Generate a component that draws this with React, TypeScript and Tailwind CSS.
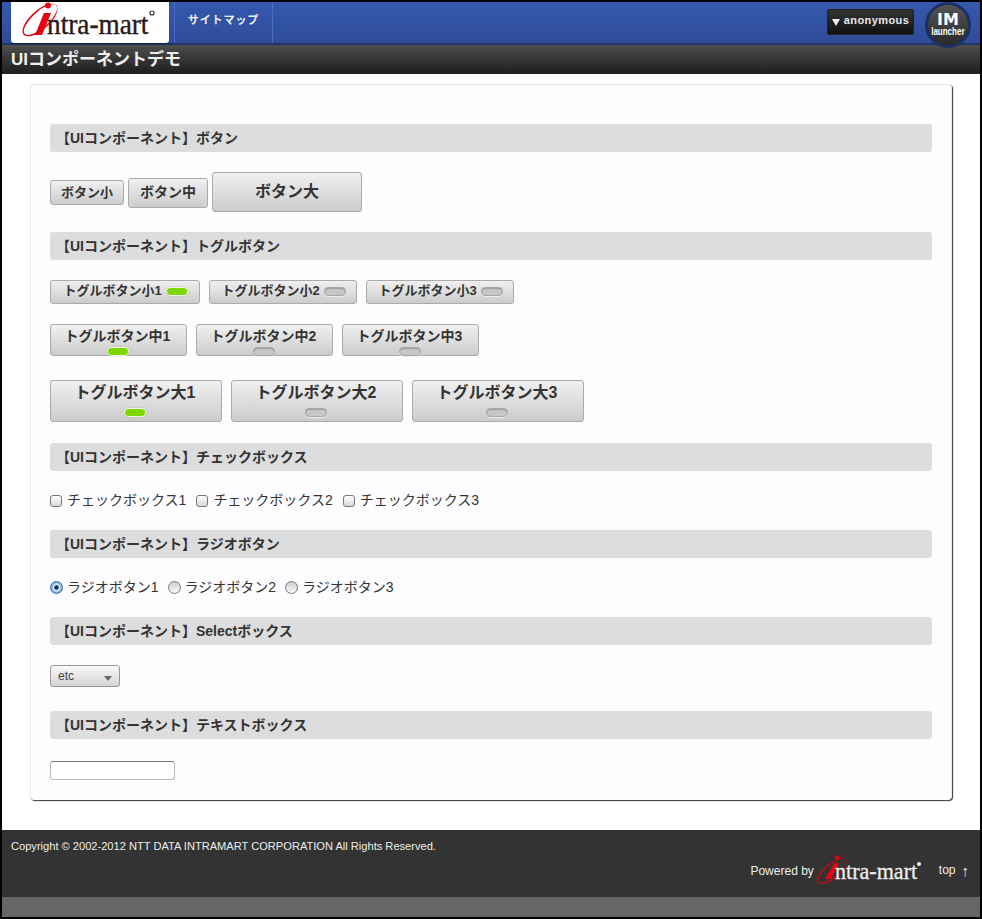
const font = '[font-family:"Liberation_Sans","Noto_Sans_CJK_JP",sans-serif]'

function Logo({ small }: { small?: boolean }) {
  if (small) {
    return (
      <div className="relative h-[32px] w-[106px]">
        <svg className="absolute left-0 top-0" width="106" height="32" viewBox="0 0 106 32">
          <ellipse cx="15" cy="17" rx="18" ry="7.5" transform="rotate(-40 15 17)" fill="#e60012" />
          <ellipse cx="15.4" cy="16.7" rx="17.4" ry="6.4" transform="rotate(-40 15.4 16.7)" fill="#333333" />
          <path d="M17 9 L22 9 L14 25 L8 25 Z" fill="#e60012" />
          <circle cx="20" cy="3.5" r="2.3" fill="#e60012" />
          <circle cx="102" cy="10" r="2" fill="#eeeeee" />
        </svg>
        <span className='absolute left-[18px] top-[2px] origin-left scale-x-[0.92] whitespace-nowrap font-["Liberation_Serif",serif] text-[24px] leading-[30px] text-[#eeeeee] [-webkit-text-stroke:0.3px_#eeeeee]'>
          ntra-mart
        </span>
      </div>
    )
  }
  return (
    <div className="relative h-[41px] w-[158px] rounded-b-[3px] bg-white shadow-[0_1px_1px_rgba(0,0,0,0.3)]">
      <svg className="absolute left-0 top-0" width="158" height="41" viewBox="0 0 158 41">
        <ellipse cx="29" cy="18" rx="22" ry="9.5" transform="rotate(-42 29 18)" fill="#e60012" />
        <ellipse cx="29.5" cy="17.6" rx="21.2" ry="8" transform="rotate(-42 29.5 17.6)" fill="#ffffff" />
        <path d="M33 11 L40 11 L31 33 L24 33 Z" fill="#e60012" />
        <circle cx="37" cy="3.5" r="3" fill="#e60012" />
        <circle cx="141" cy="11" r="2" fill="none" stroke="#333333" strokeWidth="1.2" />
      </svg>
      <span className='absolute left-[36px] top-[6px] origin-left scale-x-[0.94] whitespace-nowrap font-["Liberation_Serif",serif] text-[29px] leading-[32px] text-[#2a1a18] [-webkit-text-stroke:0.4px_#2a1a18]'>
        ntra-mart
      </span>
    </div>
  )
}

function SectionHead({ children }: { children: string }) {
  return (
    <h2 className="flex h-[28px] items-center rounded-[3px] bg-[#dddddd] pl-[6px] text-[14px] font-bold text-[#333333]">
      {children}
    </h2>
  )
}

const raised =
  'rounded-[3px] border border-[#aaaaaa] bg-gradient-to-b from-[#f0f0f0] to-[#cccccc] font-bold text-[#333333]'

function Led({ on }: { on?: boolean }) {
  return (
    <span
      className={
        on
          ? 'block h-[7px] w-[20px] rounded-[4px] bg-[#7ed800] shadow-[0_0_0_1px_#f0f6e0,0_0_2px_1px_rgba(120,140,80,0.4)]'
          : 'block h-[7px] w-[20px] rounded-[4px] bg-[#c6c6c6] shadow-[0_0_0_1px_#a8a8a8,inset_0_1px_1px_rgba(0,0,0,0.2),0_1px_0_1px_#eeeeee]'
      }
    />
  )
}

function Checkbox({ label }: { label: string }) {
  return (
    <label className="flex items-center">
      <input
        type="checkbox"
        className="mr-[5px] h-[12px] w-[12px] appearance-none rounded-[3px] border border-[#777777] bg-gradient-to-b from-[#ffffff] to-[#d8d8d8]"
      />
      {label}
    </label>
  )
}

function Radio({ label, checked }: { label: string; checked?: boolean }) {
  return (
    <label className="flex items-center">
      <span
        className={
          checked
            ? 'mr-[4px] h-[13px] w-[13px] rounded-full border border-[#3a6ea5] bg-[radial-gradient(circle,#12325a_0,#12325a_24%,#e8f4ff_34%,#7fb6ea_62%,#2f7ccc_100%)]'
            : 'mr-[4px] h-[13px] w-[13px] rounded-full border border-[#777777] bg-gradient-to-b from-[#cfcfcf] to-[#fafafa]'
        }
      />
      {label}
    </label>
  )
}

export default function App() {
  return (
    <div className={`h-[919px] bg-black p-[2px] ${font}`}>
      <div className="relative flex h-[915px] flex-col bg-white">
        {/* header */}
        <header className="flex h-[43px] shrink-0 items-start border-b-2 border-[#1f3468] bg-gradient-to-b from-[#3558ae] to-[#2f4c98] pl-[9px]">
          <Logo />
          <nav className="ml-[5px] flex h-[41px] w-[99px] items-start justify-center border-x border-[#4a6cc4] pt-[11px] text-[11px] leading-[14px] font-bold tracking-[0.9px] text-[#eeeeee]">
            サイトマップ
          </nav>
          <button className="ml-auto mr-[66px] mt-[7px] flex h-[26px] w-[87px] items-center justify-center rounded-[2px] border border-[#222222] bg-gradient-to-b from-[#333333] to-[#111111] pb-[3px] text-[11px] font-bold tracking-[0.4px] text-[#e8e8e8]">
            <span className="relative top-[2px] mr-[4px] border-x-[4px] border-t-[7px] border-x-transparent border-t-[#eeeeee]" />
            anonymous
          </button>
        </header>

        {/* launcher badge */}
        <div className="absolute right-[9px] top-0 flex h-[46px] w-[46px] flex-col items-center justify-start rounded-full border-[3px] border-[#1c2f66] bg-gradient-to-b from-[#555555] to-[#2a2a2a] pt-[7px] text-white">
          <span className='font-["DejaVu_Sans",sans-serif] text-[16px] leading-[15px] font-bold'>IM</span>
          <span className="scale-x-[0.8] text-[10px] leading-[10px] font-bold">launcher</span>
        </div>

        <div className="flex h-[29px] shrink-0 items-center bg-gradient-to-b from-[#4e4e4e] to-[#1e1e1e] pl-[9px] text-[17px] font-bold text-[#f0f0f0]">
          UIコンポーネントデモ
        </div>

        {/* main */}
        <main className="flex-1 px-[28px] pt-[10px]">
          <div className="h-[716px] rounded-[4px] border-x border-t border-[#e8e8e8] bg-[#fdfdff] px-[19px] pt-[39px] shadow-[1px_1px_1px_rgba(0,0,0,0.8)]">
            <SectionHead>【UIコンポーネント】ボタン</SectionHead>
            <div className="mt-[20px] flex items-baseline gap-[4px]">
              <button className={`h-[25px] w-[74px] text-[13px] ${raised}`}>ボタン小</button>
              <button className={`h-[30px] w-[80px] text-[14px] ${raised}`}>ボタン中</button>
              <button className={`h-[40px] w-[150px] text-[16px] ${raised}`}>ボタン大</button>
            </div>

            <div className="mt-[20px]">
              <SectionHead>【UIコンポーネント】トグルボタン</SectionHead>
            </div>
            <div className="mt-[20px] flex gap-[9px]">
              <button className={`flex h-[24px] w-[150px] items-center justify-center gap-[5px] pb-[2px] text-[13px] ${raised}`}>
                トグルボタン小1 <Led on />
              </button>
              <button className={`flex h-[24px] w-[148px] items-center justify-center gap-[5px] pb-[2px] text-[13px] ${raised}`}>
                トグルボタン小2 <Led />
              </button>
              <button className={`flex h-[24px] w-[148px] items-center justify-center gap-[5px] pb-[2px] text-[13px] ${raised}`}>
                トグルボタン小3 <Led />
              </button>
            </div>
            <div className="mt-[20px] flex gap-[9px]">
              {['トグルボタン中1', 'トグルボタン中2', 'トグルボタン中3'].map((t, i) => (
                <button key={t} className={`flex h-[32px] w-[137px] flex-col items-center pr-[2px] pt-[2px] text-[14px] leading-[18px] ${raised}`}>
                  {t}
                  <span className="mt-[3px]"><Led on={i === 0} /></span>
                </button>
              ))}
            </div>
            <div className="mt-[24px] flex gap-[9px]">
              {['トグルボタン大1', 'トグルボタン大2', 'トグルボタン大3'].map((t, i) => (
                <button key={t} className={`flex h-[42px] w-[172px] flex-col items-center pr-[2px] pt-[1px] text-[16px] leading-[22px] ${raised}`}>
                  {t}
                  <span className="mt-[5px]"><Led on={i === 0} /></span>
                </button>
              ))}
            </div>

            <div className="mt-[21px]">
              <SectionHead>【UIコンポーネント】チェックボックス</SectionHead>
            </div>
            <div className="mt-[20px] flex h-[19px] items-center gap-[10px] text-[14px] text-[#333333]">
              <Checkbox label="チェックボックス1" />
              <Checkbox label="チェックボックス2" />
              <Checkbox label="チェックボックス3" />
            </div>

            <div className="mt-[20px]">
              <SectionHead>【UIコンポーネント】ラジオボタン</SectionHead>
            </div>
            <div className="mt-[20px] flex h-[19px] items-center gap-[9px] text-[14px] text-[#333333]">
              <Radio label="ラジオボタン1" checked />
              <Radio label="ラジオボタン2" />
              <Radio label="ラジオボタン3" />
            </div>

            <div className="mt-[20px]">
              <SectionHead>【UIコンポーネント】Selectボックス</SectionHead>
            </div>
            <div className="relative mt-[20px] flex h-[22px] w-[70px] items-center rounded-[3px] border border-[#999999] bg-gradient-to-b from-[#fafafa] to-[#d4d4d4] pl-[7px] text-[12px] text-[#444444]">
              etc
              <span className="absolute right-[7px] top-[10px] border-x-[4px] border-t-[5px] border-x-transparent border-t-[#666666]" />
            </div>

            <div className="mt-[24px]">
              <SectionHead>【UIコンポーネント】テキストボックス</SectionHead>
            </div>
            <input
              type="text"
              className="mt-[22px] block h-[19px] w-[125px] rounded-[3px] border border-[#bbbbbb] border-t-[#777777] bg-white"
            />
          </div>
        </main>

        {/* footer */}
        <footer className="h-[87px] shrink-0 bg-[#333333] text-[#eeeeee]">
          <div className="relative h-[67px] pl-[9px] pt-[9px] text-[11.1px] leading-[15px]">
            Copyright © 2002-2012 NTT DATA INTRAMART CORPORATION All Rights Reserved.
            <div className="absolute right-[11px] top-[24px] flex items-center text-[12px]">
              <span className="mr-[3px] mt-[3px]">Powered by</span>
              <Logo small />
              <span className="ml-[16px] flex items-center">
                top
                <span className="ml-[6px] text-[15px] leading-[15px]">↑</span>
              </span>
            </div>
          </div>
          <div className="h-[20px] bg-[#666666]" />
        </footer>
      </div>
    </div>
  )
}
